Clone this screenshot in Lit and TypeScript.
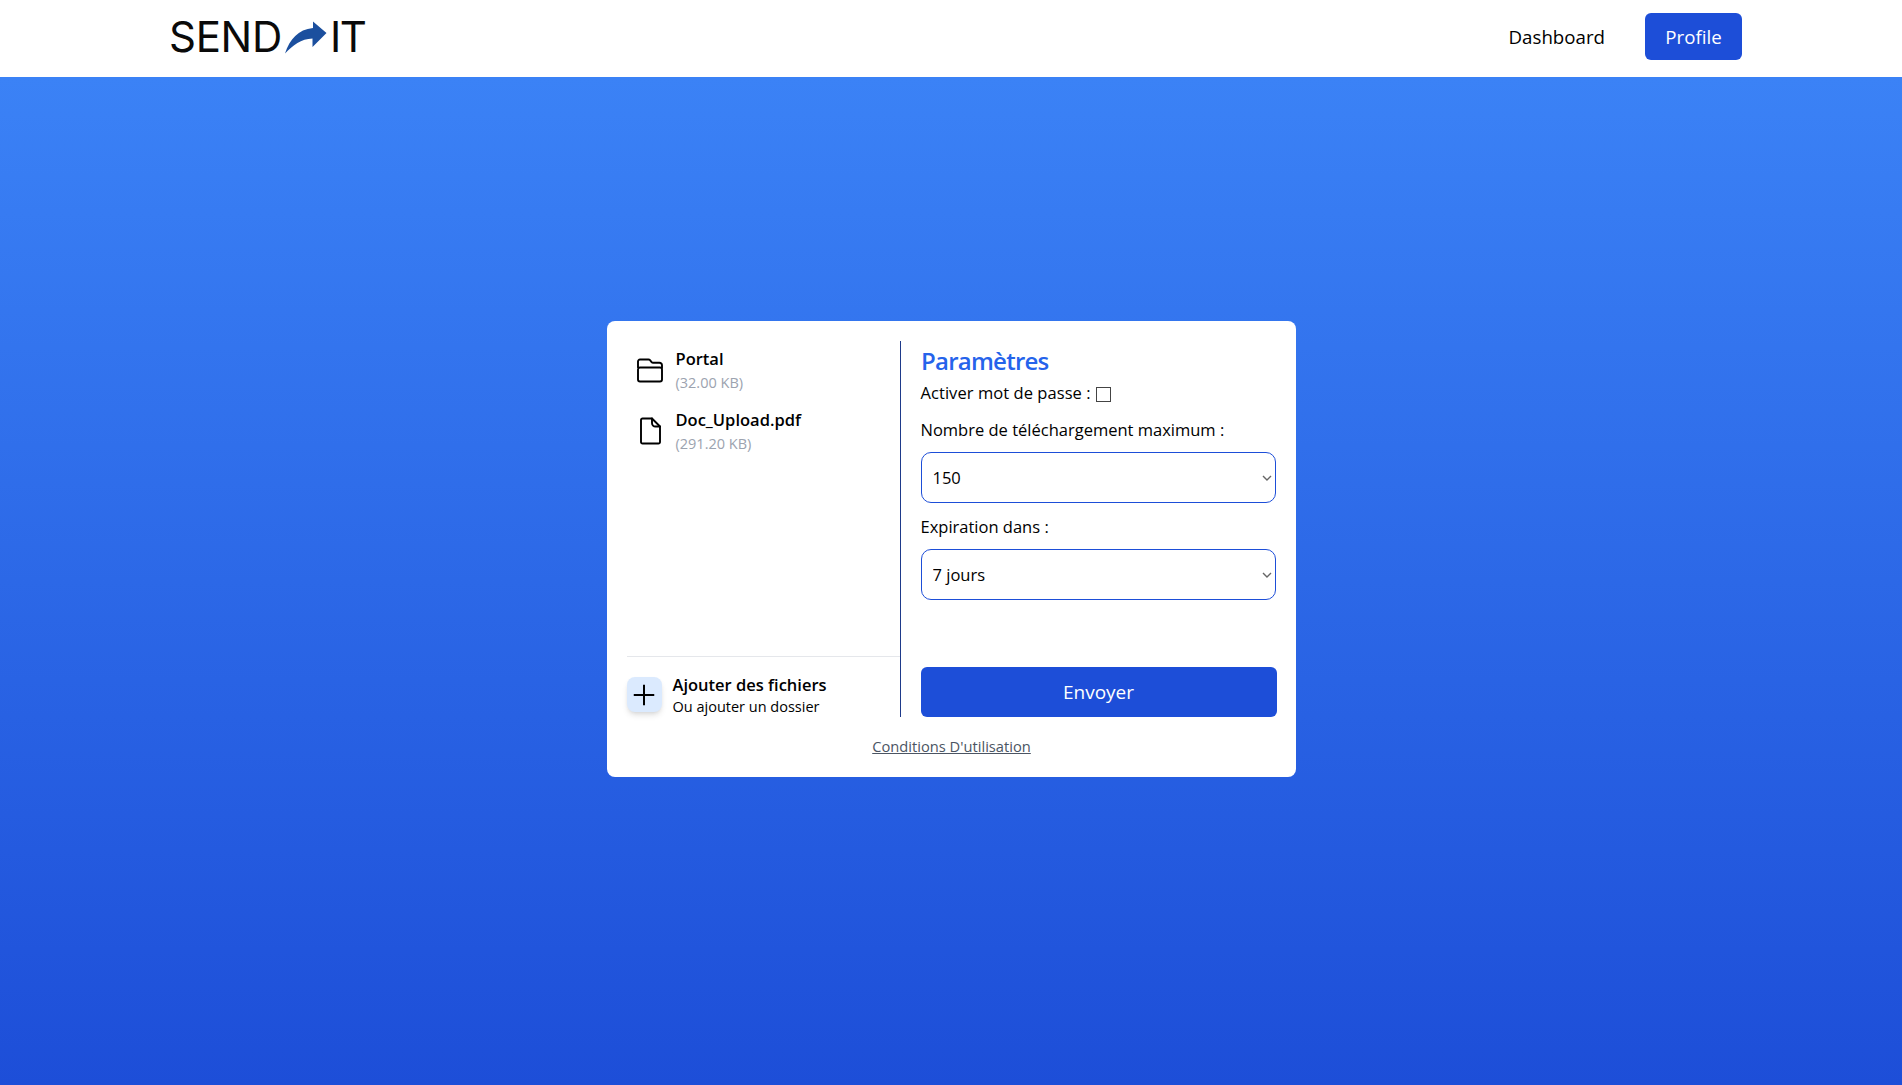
import { LitElement, html, css } from "lit";
import { customElement } from "lit/decorators.js";

@customElement("app-root")
export class AppRoot extends LitElement {
  static styles = css`
    :host { display: flex; flex-direction: column; min-height: 100vh; font-family: "Open Sans", "Noto Sans", sans-serif; color: #000; font-size: 16.5px; }
    * { box-sizing: border-box; }
    .nav { height: 77px; background: #fff; display: flex; align-items: center; justify-content: space-between; padding: 0 160px 0 169px; flex: none; }
    .logo { display: flex; align-items: center; font-family: "Inter", sans-serif; font-size: 42px; font-weight: 400; color: #0a0a0a; letter-spacing: -0.3px; line-height: 1; margin-top: -3px; }
    .logo svg { display: block; width: 42px; height: 33px; margin: 0 3px 0 3px; }
    .it { letter-spacing: -1.5px; }
    .links { display: flex; align-items: center; gap: 20px; margin-top: -4px; }
    .link { padding: 0 20px; font-size: 18.7px; }
    .profile { width: 97px; height: 47px; background: #1d4ed8; color: #fff; border-radius: 6px; font-size: 18.7px; display: flex; align-items: center; justify-content: center; }
    .main { flex: 1; background: linear-gradient(to bottom, #3b82f6, #1d4ed8); display: flex; justify-content: center; padding-top: 244px; padding-bottom: 308px; }
    .card { width: 689px; height: 456px; background: #fff; border-radius: 8px; padding: 20px 19px 0 20px; display: flex; flex-direction: column; }
    .cols { display: flex; height: 376px; }
    .left { width: 274px; border-right: 1px solid #1e3a8a; display: flex; flex-direction: column; }
    .files { flex: 1; padding: 7px 0 0 9px; display: flex; flex-direction: column; gap: 16px; }
    .file { display: flex; align-items: center; gap: 12px; }
    .file svg { width: 28px; height: 28px; flex: none; margin-bottom: 2px; }
    .fname { font-weight: 600; line-height: 22px; }
    .fsize { font-size: 14.5px; font-weight: 500; color: #9ca3af; line-height: 20px; margin-top: 3px; }
    .add { border-top: 1px solid #e5e7eb; height: 61px; display: flex; align-items: flex-start; gap: 11px; padding-top: 20px; }
    .plus { width: 35px; height: 35px; background: #dbeafe; border-radius: 8px; box-shadow: 0 4px 6px -1px rgba(0,0,0,.12), 0 2px 4px -2px rgba(0,0,0,.1); display: flex; align-items: center; justify-content: center; flex: none; }
    .plus svg { width: 24px; height: 24px; display: block; }
    .addtext { margin-top: -4px; }
    .a1 { font-weight: 600; line-height: 24px; }
    .a2 { font-size: 14.5px; line-height: 20px; font-weight: 500; }
    .a2 span { font-weight: 400; }
    .right { flex: 1; padding-left: 20px; display: flex; flex-direction: column; }
    h2 { margin: 0; font-size: 24px; font-weight: 600; color: #2563eb; line-height: 32px; letter-spacing: -0.75px; margin-top: 4px; padding-left: 0.5px; }
    .check { display: flex; align-items: center; gap: 5px; line-height: 24px; height: 24px; margin-top: 4px; letter-spacing: 0.06px; }
    .box { width: 15px; height: 15px; border: 1.5px solid #444; margin-top: 2px; }
    label { display: block; line-height: 24px; }
    .lab1 { margin-top: 13px; }
    .lab2 { margin-top: 12px; }
    .sel { position: relative; margin-top: 10px; width: 355px; height: 51px; }
    .sel svg { position: absolute; right: 4px; top: 23px; width: 10px; height: 6px; pointer-events: none; }
    select { display: block; appearance: none; width: 100%; height: 100%; border: 1px solid #1d4ed8; border-radius: 10px; background: #fff; font: inherit; padding: 0 11px; color: #000; outline: none; }
    .send { margin-top: auto; width: 356px; height: 50px; background: #1d4ed8; color: #fff; border: none; border-radius: 6px; font: inherit; font-size: 19px; display: block; padding: 0; }
    .foot { text-align: center; font-size: 14.7px; font-weight: 500; color: #4b5563; margin-top: 19px; line-height: 20px; }
    .foot a { color: inherit; text-decoration: underline; }
  `;

  private chevron() {
    return html`<svg viewBox="0 0 10 6" fill="none" stroke="#666" stroke-width="1.4"><path d="M1 1l4 4 4-4"/></svg>`;
  }

  render() {
    return html`
      <div class="nav">
        <div class="logo">
          <span>SEND</span>
          <svg viewBox="0 0 42 33"><path fill="#1b4f9e" d="M0 32.5 C5 18 13 8.5 28 7 L28 0.5 L41.5 12 L27.5 26 L27.5 17.5 C16 18 8 24 0 32.5 Z"/></svg>
          <span class="it">IT</span>
        </div>
        <div class="links">
          <span class="link">Dashboard</span>
          <span class="profile">Profile</span>
        </div>
      </div>
      <div class="main">
        <div class="card">
          <div class="cols">
            <div class="left">
              <div class="files">
                <div class="file">
                  <svg viewBox="0 0 28 28" fill="none" stroke="#000" stroke-width="1.9" stroke-linecap="round" stroke-linejoin="round"><path d="M2 11.5V5.5a2 2 0 0 1 2-2h8.5a2 2 0 0 1 1.5.7l1.6 1.9a2 2 0 0 0 1.5.7h6.4a2.5 2.5 0 0 1 2.5 2.5v3M4 11.5h20a2 2 0 0 1 2 2v10a2 2 0 0 1-2 2H4a2 2 0 0 1-2-2v-10a2 2 0 0 1 2-2Z"/></svg>
                  <div><div class="fname">Portal</div><div class="fsize">(32.00 KB)</div></div>
                </div>
                <div class="file">
                  <svg viewBox="0 0 28 28" fill="none" stroke="#000" stroke-width="1.9" stroke-linecap="round" stroke-linejoin="round"><path d="M6.5 1.5h9.5l8 8V25a1.5 1.5 0 0 1-1.5 1.5h-16A1.5 1.5 0 0 1 5 25V3a1.5 1.5 0 0 1 1.5-1.5Z"/><path d="M16 1.5V6a3.5 3.5 0 0 0 3.5 3.5H24"/></svg>
                  <div><div class="fname">Doc_Upload.pdf</div><div class="fsize">(291.20 KB)</div></div>
                </div>
              </div>
              <div class="add">
                <div class="plus"><svg viewBox="0 0 24 24" fill="none" stroke="#000" stroke-width="2"><path d="M12 1.75v20.5M1.75 12h20.5"/></svg></div>
                <div class="addtext">
                  <div class="a1">Ajouter des fichiers</div>
                  <div class="a2"><span>Ou</span> ajouter un dossier</div>
                </div>
              </div>
            </div>
            <div class="right">
              <h2>Paramètres</h2>
              <div class="check"><span>Activer mot de passe :</span><span class="box"></span></div>
              <label class="lab1">Nombre de téléchargement maximum :</label>
              <div class="sel"><select><option>150</option></select>${this.chevron()}</div>
              <label class="lab2">Expiration dans :</label>
              <div class="sel"><select><option>7 jours</option></select>${this.chevron()}</div>
              <button class="send">Envoyer</button>
            </div>
          </div>
          <div class="foot"><a>Conditions D'utilisation</a></div>
        </div>
      </div>
    `;
  }
}
